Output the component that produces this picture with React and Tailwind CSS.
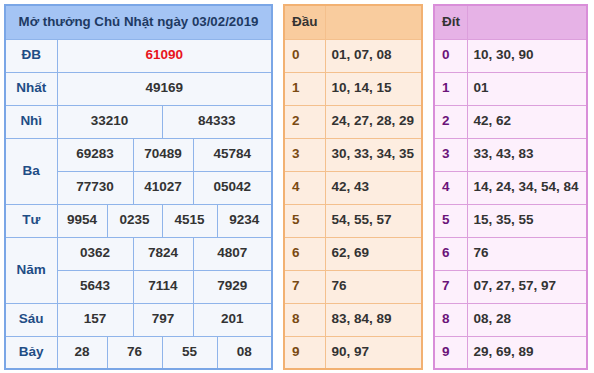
const main = [
  { label: "ĐB", cells: [["61090", 6]], red: true },
  { label: "Nhất", cells: [["49169", 6]] },
  { label: "Nhì", cells: [["33210", 3], ["84333", 3]] },
  { label: "Ba", span: 2, cells: [["69283", 2], ["70489", 2], ["45784", 2]] },
  { cells: [["77730", 2], ["41027", 2], ["05042", 2]] },
  { label: "Tư", cells: [["9954", 1], ["0235", 2], ["4515", 2], ["9234", 1]] },
  { label: "Năm", span: 2, cells: [["0362", 2], ["7824", 2], ["4807", 2]] },
  { cells: [["5643", 2], ["7114", 2], ["7929", 2]] },
  { label: "Sáu", cells: [["157", 2], ["797", 2], ["201", 2]] },
  { label: "Bảy", cells: [["28", 1], ["76", 2], ["55", 2], ["08", 1]] },
];

const dau = [
  "01, 07, 08",
  "10, 14, 15",
  "24, 27, 28, 29",
  "30, 33, 34, 35",
  "42, 43",
  "54, 55, 57",
  "62, 69",
  "76",
  "83, 84, 89",
  "90, 97",
];

const dit = [
  "10, 30, 90",
  "01",
  "42, 62",
  "33, 43, 83",
  "14, 24, 34, 54, 84",
  "15, 35, 55",
  "76",
  "07, 27, 57, 97",
  "08, 28",
  "29, 69, 89",
];

function MainTable() {
  return (
    <table className="table-fixed border-collapse border-2 border-[#7aa6e6] w-[267px]">
      <colgroup>
        <col className="w-[52px]" />
        <col className="w-[50px]" />
        <col className="w-[26px]" />
        <col className="w-[29px]" />
        <col className="w-[31px]" />
        <col className="w-[24px]" />
        <col className="w-[55px]" />
      </colgroup>
      <thead>
        <tr className="h-[34px] bg-[#a4c4f4]">
          <th colSpan={7} className="text-[#1e3a63] text-[13.3px] font-bold text-center">
            Mở thưởng Chủ Nhật ngày 03/02/2019
          </th>
        </tr>
      </thead>
      <tbody className="bg-[#f4f7fc]">
        {main.map((row, i) => (
          <tr key={i} className="h-[33px]">
            {row.label && (
              <td
                rowSpan={row.span || 1}
                className="border border-[#8fb4ea] text-center font-bold text-[13.5px] text-[#1f4d85]"
              >
                {row.label}
              </td>
            )}
            {row.cells.map(([v, s], j) => (
              <td
                key={j}
                colSpan={s}
                className={`border border-[#8fb4ea] text-center font-bold text-[13.5px] ${
                  row.red ? "text-[#e8141c]" : "text-[#333333]"
                }`}
              >
                {v}
              </td>
            ))}
          </tr>
        ))}
      </tbody>
    </table>
  );
}

function SideTable({ title, rows, outer, inner, head, body, digit, width, first }) {
  return (
    <table className={`table-fixed border-collapse border-2 ${outer} ${width}`}>
      <colgroup>
        <col className={first} />
        <col />
      </colgroup>
      <thead>
        <tr className={`h-[34px] ${head}`}>
          <th className={`border ${inner} text-left pl-[7px] text-[13.5px] font-bold text-[#333333]`}>{title}</th>
          <th className={`border ${inner}`}></th>
        </tr>
      </thead>
      <tbody className={body}>
        {rows.map((r, i) => (
          <tr key={i} className="h-[33px]">
            <td className={`border ${inner} pl-[7px] text-[13.5px] font-bold ${digit}`}>{i}</td>
            <td className={`border ${inner} pl-[6px] text-[13.5px] font-bold text-[#333333] whitespace-nowrap`}>{r}</td>
          </tr>
        ))}
      </tbody>
    </table>
  );
}

export default function App() {
  return (
    <div className="w-[594px] h-[373px] bg-white font-['Liberation_Sans',Arial,sans-serif]">
      <div className="flex items-start gap-[10px] pl-[4px] pt-[4px]">
        <MainTable />
        <SideTable
          title="Đầu"
          rows={dau}
          outer="border-[#f2b172]"
          inner="border-[#f4c08d]"
          head="bg-[#f9cc9e]"
          body="bg-[#fdede0]"
          digit="text-[#7a4a12]"
          width="w-[140px]"
          first="w-[41px]"
        />
        <SideTable
          title="Đít"
          rows={dit}
          outer="border-[#d98ed9]"
          inner="border-[#dc9fdc]"
          head="bg-[#e6b2e6]"
          body="bg-[#fdf0fc]"
          digit="text-[#6b1379]"
          width="w-[155px]"
          first="w-[33px]"
        />
      </div>
    </div>
  );
}
